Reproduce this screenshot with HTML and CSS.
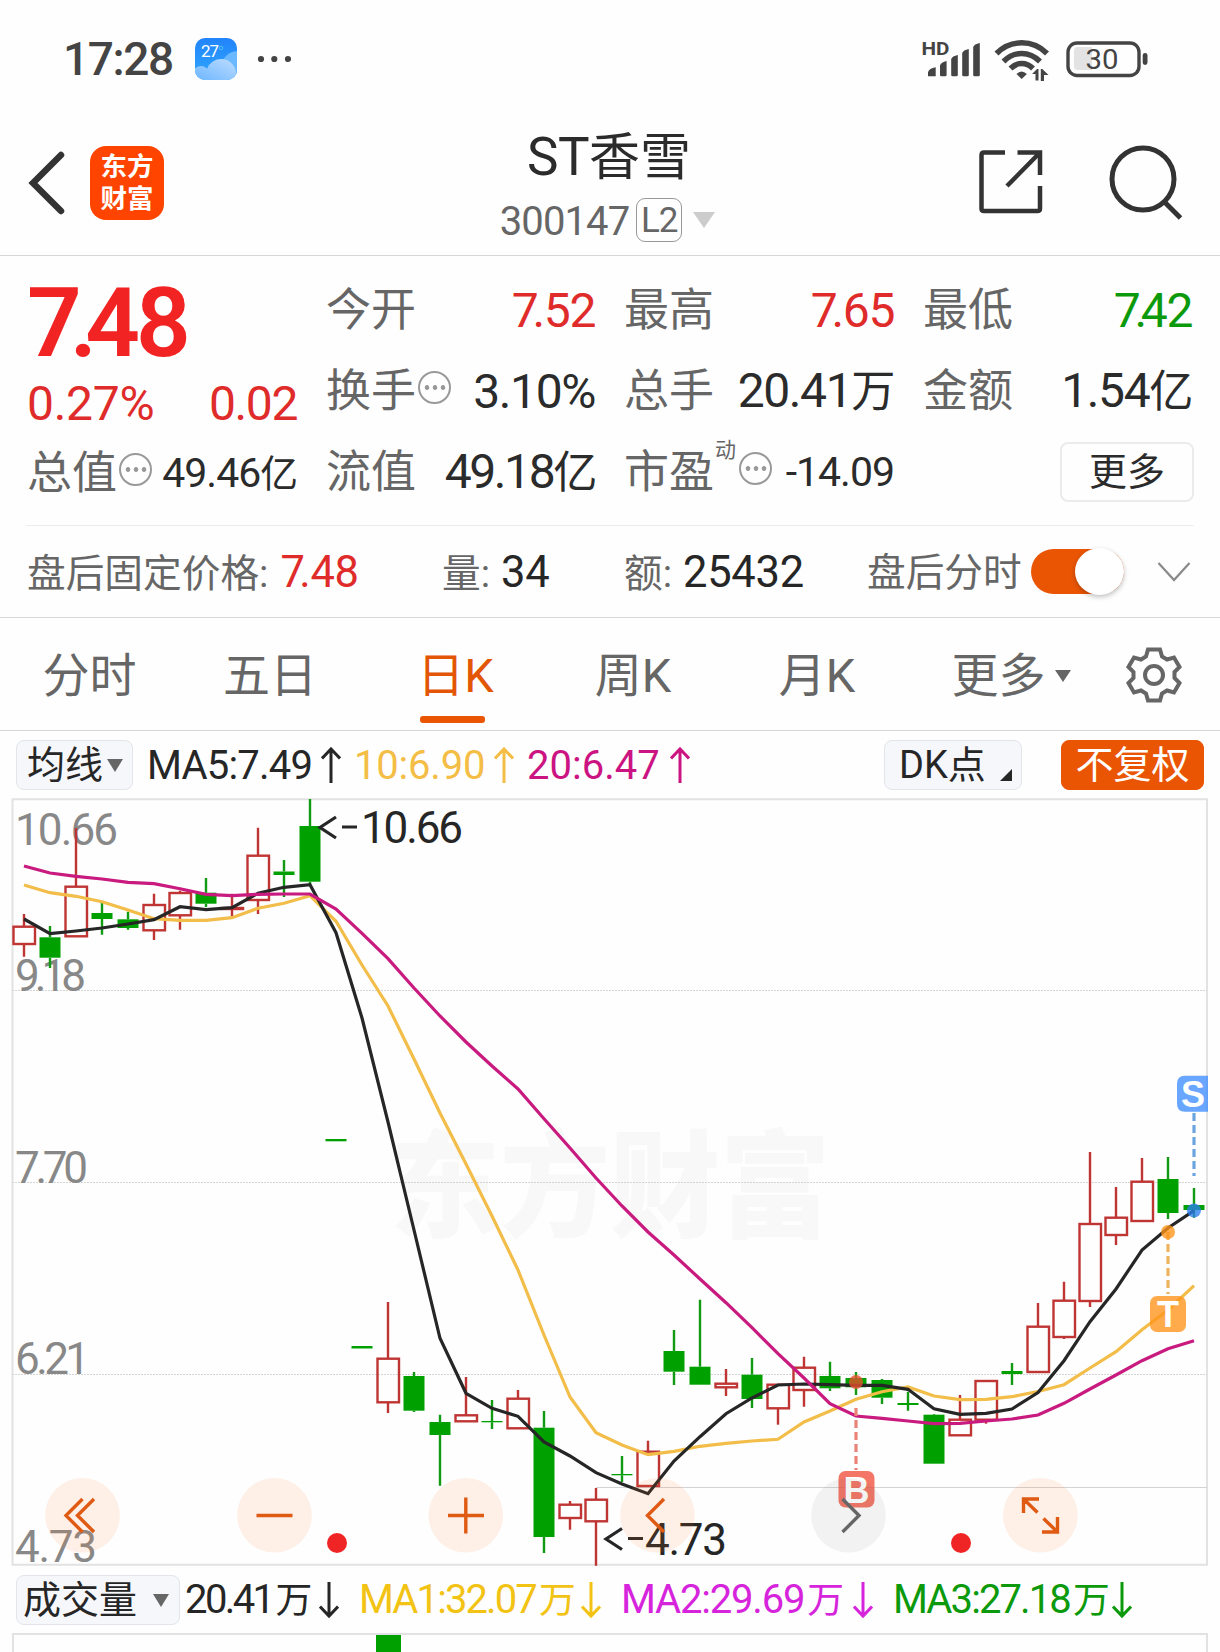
FILE: index.html
```html
<!DOCTYPE html>
<html lang="zh-CN">
<head>
  <meta charset="UTF-8">
  <meta name="viewport" content="width=device-width, initial-scale=1.0">
  <title>ST香雪 300147</title>
  <link rel="stylesheet" href="styles.css">
</head>
<body>
  <!-- Status bar -->
  <div class="status">
    <span class="clock">17:28</span>
    <svg class="weather" width="42" height="42" viewBox="0 0 42 42">
      <defs>
        <linearGradient id="sky" x1="0" y1="0" x2="0" y2="1"><stop offset="0" stop-color="#2284fb"/><stop offset="1" stop-color="#2fa8fd"/></linearGradient>
        <linearGradient id="cloud" x1="0" y1="1" x2="1" y2="0"><stop offset="0" stop-color="#6db6ff"/><stop offset="1" stop-color="#bcdcff"/></linearGradient>
        <clipPath id="tile"><rect width="42" height="42" rx="10"/></clipPath>
      </defs>
      <g clip-path="url(#tile)">
        <rect width="42" height="42" fill="url(#sky)"/>
        <circle cx="43" cy="30" r="17" fill="#6ab8ff"/>
        <circle cx="6" cy="36" r="8" fill="#8cc5ff"/>
        <path d="M0 42V33a8 8 0 0 1 12-2a15 15 0 0 1 29 3v8z" fill="url(#cloud)"/>
      </g>
      <text x="6" y="19" class="weather-text">27</text>
      <circle cx="26" cy="10" r="1.8" fill="none" stroke="#4fc0f0"/>
    </svg>
    <svg class="dots" width="34" height="8" viewBox="0 0 34 8" fill="#444"><circle cx="4" cy="4" r="3.1"/><circle cx="17.3" cy="4" r="3.1"/><circle cx="31" cy="4" r="3.1"/></svg>
    <svg class="system" width="230" height="46" viewBox="920 36 230 46" fill="#444">
      <text x="921.5" y="54.5" class="hd" textLength="28" lengthAdjust="spacingAndGlyphs">HD</text>
      <path d="M928 76.300v-4q1-4 7.700-5v9zM940 75V65.500q1-3.500 6.600-4.500V75q0 1.300-1.300 1.300h-4q-1.300 0-1.300-1.300zM951.200 75V59q1-3 6.600-4V75q0 1.300-1.300 1.300h-4q-1.300 0-1.300-1.300zM962.200 75V53q1-3 6.600-4V75q0 1.300-1.300 1.300h-4q-1.300 0-1.300-1.300zM973.200 75V47q1-3 6.600-4V75q0 1.300-1.300 1.300h-4q-1.300 0-1.300-1.300z"/>
      <g fill="none" stroke="#444" stroke-width="5.600">
        <path d="M996.500 53.500Q1007 42.800 1021.700 42.800T1047 53.500"/>
        <path d="M1003.500 61.500Q1011.500 53.500 1021.700 53.500T1040 61.500"/>
        <path d="M1010.500 68.500Q1015.500 63.500 1021.700 63.500T1033 68.500"/>
      </g>
      <path d="M1016.500 74q5-5 10.400 0l-5.200 5z"/>
      <path d="M1032 74l5-5h1.500v11.500h-3V74zM1048.500 75h-4.500v6h-3.200V69h1.500z"/>
      <rect x="1068" y="43" width="71" height="32.500" rx="9" fill="none" stroke="#444" stroke-width="3.400"/>
      <path d="M1078 47h14v23h-14q-4 0-4-4V51q0-4 4-4z" fill="#e3e3e3"/>
      <rect x="1142.700" y="53" width="4.800" height="12" rx="2.400"/>
      <text x="1085.500" y="69" class="battery" textLength="33" lengthAdjust="spacingAndGlyphs">30</text>
    </svg>
  </div>

  <!-- Title bar -->
  <div class="navbar">
    <svg class="back" width="40" height="66" viewBox="0 0 40 66"><path d="M34 5L6 33l28 28" fill="none" stroke="#333" stroke-width="6.500" stroke-linecap="round"/></svg>
    <div class="logo">东方<br>财富</div>
    <div class="title">
      <div class="name">ST<span>香雪</span></div>
      <div class="code"><span class="digits">300147</span><span class="level">L2</span><i class="tri light"></i></div>
    </div>
    <svg class="share" width="64" height="64" viewBox="0 0 64 64" fill="none" stroke="#333" stroke-width="4.500"><path d="M26 2.500H5Q2.500 2.500 2.500 5v53.500q0 2.500 2.500 2.500h53.500q2.500 0 2.500-2.500V36M38.500 2.500H61V25M61 2.500L28 36"/></svg>
    <svg class="search" width="76" height="76" viewBox="0 0 76 76" fill="none" stroke="#333" stroke-width="5"><circle cx="36" cy="35" r="31"/><path d="M57 57.500L73.500 74"/></svg>
  </div>

  <!-- Quote -->
  <div class="quote">
    <div class="col">
      <div class="price"><s>7</s><s>.</s>48</div>
      <div class="change"><span class="val red wide">0.27%</span><span class="val red">0.02</span></div>
      <div class="item"><span class="label">总值</span><i class="info"></i><span class="val small">49.46<b>亿</b></span></div>
    </div>
    <div class="col">
      <div class="item"><span class="label">今开</span><span class="val red"><s>7</s>.52</span></div>
      <div class="item"><span class="label">换手</span><i class="info"></i><span class="val">3.10%</span></div>
      <div class="item"><span class="label">流值</span><span class="val tight">49.18<b>亿</b></span></div>
    </div>
    <div class="col">
      <div class="item"><span class="label">最高</span><span class="val red"><s>7</s>.65</span></div>
      <div class="item"><span class="label">总手</span><span class="val">20.41<b>万</b></span></div>
      <div class="item"><span class="label">市盈</span><span class="sup">动</span><i class="info"></i><span class="val small">-14.09</span></div>
    </div>
    <div class="col">
      <div class="item"><span class="label">最低</span><span class="val green"><s>7</s><s>.</s>42</span></div>
      <div class="item"><span class="label">金额</span><span class="val">1.54<b>亿</b></span></div>
      <div class="item end"><button class="more">更多</button></div>
    </div>
  </div>

  <!-- After-hours row -->
  <div class="after">
    <div class="fixed-price">盘后固定价格:<em class="red"><s>7</s>.48</em></div>
    <div class="lots">量:<em>34</em></div>
    <div class="amount">额:<em>25432</em></div>
    <div class="switch-label">盘后分时</div>
    <span class="toggle"></span>
    <svg width="34" height="20" viewBox="0 0 34 20"><path d="M1.500 1L17 18 32.500 1" fill="none" stroke="#8a8a8a" stroke-width="2.200"/></svg>
  </div>

  <!-- Period tabs -->
  <div class="tabs">
    <span>分时</span>
    <span>五日</span>
    <span class="active">日K</span>
    <span>周K</span>
    <span>月K</span>
    <span>更多<i class="tri"></i></span>
    <svg width="58" height="58" viewBox="-29 -29 58 58" fill="none" stroke="#666" stroke-width="4">
      <path d="M-6-25.500H6L8-18.500 13-15.500 20-17.500 25.500-8 20.500-3V3L25.500 8 20 17.500 13 15.500 8 18.500 6 25.500H-6L-8 18.500-13 15.500-20 17.500-25.500 8-20.500 3V-3L-25.500-8-20-17.500-13-15.500-8-18.500z"/>
      <circle r="9"/>
    </svg>
  </div>

  <!-- Moving averages -->
  <div class="indicators">
    <span class="chip avg">均线<i class="tri"></i></span>
    <span class="ma black">MA5:7.49</span><svg class="arrow black" viewBox="0 0 20 36"><path d="M10 36V2M1 11.500L10 2l9 9.500"/></svg>
    <span class="ma yellow">10:6.90</span><svg class="arrow yellow" viewBox="0 0 20 36"><path d="M10 36V2M1 11.500L10 2l9 9.500"/></svg>
    <span class="ma magenta">20:6.47</span><svg class="arrow magenta" viewBox="0 0 20 36"><path d="M10 36V2M1 11.500L10 2l9 9.500"/></svg>
    <span class="chip dk">DK点<i class="corner"></i></span>
    <span class="chip adjust">不复权</span>
  </div>

  <!-- Daily K chart -->
  <svg class="chart" width="1220" height="768" viewBox="0 798 1220 768">
    <text x="390" y="1228" class="watermark" textLength="440" lengthAdjust="spacingAndGlyphs">东方财富</text>
    <g class="frame">
      <path d="M12.500 799.300H1207V1564.700H12.500z"/>
      <path d="M596 1487.500H1207" class="thin"/>
      <path d="M12 990.500H1207M12 1182.500H1207M12 1374.500H1207" class="grid"/>
    </g>
    <g class="axis">
      <text x="15" y="845" textLength="103">10.66</text>
      <text x="15" y="990.500" textLength="71">9.18</text>
      <text x="15" y="1182.500" textLength="73">7.70</text>
      <text x="15" y="1374" textLength="75">6.21</text>
      <text x="15" y="1562" textLength="82">4.73</text>
    </g>
    <g id="candles"></g>
    <g id="lines"></g>
    <g class="mark">
      <text x="361" y="843" textLength="102">10.66</text>
      <text x="645" y="1555" textLength="82">4.73</text>
      <path d="M336 817l-16 10.500 16 10.500M342 827h15M622 1528.500l-16 10.500 16 10.500M628 1538.500h15"/>
    </g>
    <g class="signals">
      <path d="M1194 1113V1176" stroke="#6aa5e0"/>
      <path d="M1168 1232V1294" stroke="#edb45c"/>
      <path d="M856 1408V1470" stroke="#ea8277"/>
      <circle cx="1194" cy="1210.500" r="7" fill="#2b7fee"/>
      <circle cx="1168" cy="1232" r="7" fill="#ff9419"/>
      <circle cx="856" cy="1382" r="7" fill="#e8502e"/>
      <path d="M1208 1075.700V1111.700H1185Q1177 1111.700 1177 1103.700V1083.700Q1177 1075.700 1185 1075.700z" fill="#3d8dff"/>
      <rect x="1150" y="1296" width="36" height="36" rx="7" fill="#ff9419"/>
      <rect x="838.500" y="1471" width="36" height="36.500" rx="7" fill="#f0503c"/>
      <text x="1193" y="1107">S</text>
      <text x="1168" y="1327">T</text>
      <text x="856.500" y="1502.500">B</text>
    </g>
    <circle cx="337" cy="1543" r="10" fill="#ef2424"/>
    <circle cx="961" cy="1543" r="10" fill="#ef2424"/>
    <g class="tools">
      <circle cx="82.500" cy="1515.300" r="37.300"/>
      <circle cx="274.500" cy="1515.300" r="37.300"/>
      <circle cx="465.800" cy="1515.300" r="37.300"/>
      <circle cx="657.500" cy="1515.300" r="37.300"/>
      <circle cx="848.500" cy="1515.300" r="37.300" class="off"/>
      <circle cx="1040.400" cy="1515.300" r="37.300"/>
      <path d="M82.500 1499L66 1515.500 82.500 1532M94 1499L77.500 1515.500 94 1532M256.500 1515.500H292.500M448 1515.500H484M465.800 1497.500V1533.500M664 1499L647.500 1515.500 664 1532M1023.500 1513V1499H1039M1023.500 1499L1037.500 1512.500M1042 1532H1057.500V1517M1057.500 1532L1043.500 1518.500"/>
      <path class="off" d="M842.500 1499L859 1515.500 842.500 1532"/>
    </g>
  </svg>

  <!-- Volume -->
  <div class="volume">
    <span class="chip vol">成交量<i class="tri"></i></span>
    <span class="ma black">20.41<b>万</b></span><svg class="arrow black" viewBox="0 0 20 36"><path d="M10 0V34M1 24.500L10 34l9-9.500"/></svg>
    <span class="ma gold">MA1:32.07<b>万</b></span><svg class="arrow gold" viewBox="0 0 20 36"><path d="M10 0V34M1 24.500L10 34l9-9.500"/></svg>
    <span class="ma violet">MA2:29.69<b>万</b></span><svg class="arrow violet" viewBox="0 0 20 36"><path d="M10 0V34M1 24.500L10 34l9-9.500"/></svg>
    <span class="ma green">MA3:27.18<b>万</b></span><svg class="arrow green" viewBox="0 0 20 36"><path d="M10 0V34M1 24.500L10 34l9-9.500"/></svg>
  </div>
  <div class="volume-chart"><i></i></div>

  <script>
    const START = 24;
    const STEP = 26;

    // [up, high, body top, body bottom, low] in chart coordinates
    const candles = [
      [1, 914, 926.7, 944, 956.7], [0, 926, 937.3, 957.7, 968], [1, 828, 886.7, 936.3, 936.3],
      [0, 903, 913, 919, 934.7], [0, 911.7, 919.3, 928, 929.7], [1, 893.7, 905, 930.3, 940],
      [1, 890.7, 893, 915.3, 929.7], [0, 878, 892.7, 903.7, 907], [1, 893.7, 908, 909, 916],
      [1, 827.7, 855.7, 900, 914], [0, 860, 871.5, 875, 897], [0, 799, 826, 881.7, 885],
      [0, 1140, 1139, 1141.3, 1140], [0, 1347, 1346, 1348.5, 1347], [1, 1302, 1358.7, 1402.3, 1413],
      [0, 1372, 1376, 1410.7, 1412], [0, 1414.7, 1422, 1435, 1485.7], [1, 1377, 1415.3, 1421.3, 1421],
      [0, 1400, 1421, 1422.3, 1429], [1, 1390, 1398.7, 1428.3, 1428], [0, 1411, 1427.7, 1537, 1553],
      [1, 1501, 1504.7, 1518, 1529.7], [1, 1488, 1499.7, 1521.3, 1565.7], [0, 1456, 1474, 1475.3, 1482],
      [1, 1440.7, 1451.7, 1486, 1486], [0, 1330, 1351, 1371.7, 1385], [0, 1299.7, 1366.7, 1384.7, 1384],
      [1, 1369, 1383.7, 1387.3, 1396], [0, 1358, 1374.7, 1399, 1408], [1, 1385, 1384.7, 1408.3, 1424.7],
      [1, 1356.7, 1367.7, 1390, 1406.7], [0, 1361.7, 1376, 1388.3, 1391], [0, 1372, 1378, 1387.3, 1395],
      [0, 1379, 1380, 1397.7, 1404], [0, 1391.7, 1403, 1405, 1410.7], [0, 1414, 1414.7, 1463.7, 1463],
      [1, 1395, 1419.7, 1435.3, 1435], [1, 1381, 1381, 1419.7, 1423.7], [0, 1363, 1371, 1374, 1385],
      [1, 1303, 1326.7, 1372, 1372], [1, 1281.7, 1300.7, 1337, 1339], [1, 1152, 1224, 1301, 1307],
      [1, 1187, 1217.7, 1235, 1245], [1, 1158, 1181.7, 1221, 1221], [0, 1157, 1179, 1213, 1219],
      [0, 1188, 1205, 1210, 1217.7]
    ];

    const averages = {
      ma10: [885, 892.7, 896.3, 901.7, 910, 918.7, 920.3, 920.3, 917.7, 908.3, 903.3, 895.7, 921.3, 965, 1006, 1059, 1113, 1164, 1216, 1270, 1335, 1397, 1432.7, 1445, 1454.7, 1451.3, 1446.3, 1443.3, 1441, 1439.3, 1422, 1411, 1399.3, 1391.7, 1387, 1396, 1399.7, 1399.3, 1396.7, 1391.5, 1384.7, 1368, 1351.7, 1329.7, 1310, 1285.7],
      ma5: [919, 933.7, 931, 928, 924, 919.7, 906.7, 909.7, 907.7, 893.3, 887.3, 884.7, 932.7, 1018, 1122, 1230, 1338.3, 1393.3, 1408.3, 1416.3, 1442, 1456, 1472.7, 1484, 1493.7, 1461, 1436.7, 1413.7, 1398, 1385, 1384, 1384.7, 1385.3, 1385.3, 1389.3, 1408.7, 1414.3, 1413.3, 1409, 1392.5, 1360.7, 1321.7, 1289, 1250, 1228, 1210.7],
      ma20: [866, 873, 876.3, 879, 882.3, 883.7, 888.7, 894.3, 895.7, 894.3, 894, 894, 909, 933.3, 958.7, 988, 1016, 1042, 1066, 1089, 1118.7, 1148, 1178, 1206, 1232, 1255, 1279, 1302.7, 1327.7, 1353.7, 1378, 1403.7, 1416, 1418.3, 1421, 1423.7, 1423.3, 1421, 1419, 1415, 1403.3, 1389, 1375, 1360.7, 1348.7, 1340.7]
    };

    document.getElementById('candles').innerHTML = candles.map(([up, high, top, bottom, low], i) => {
      const x = START + STEP * i;
      const wick = `M${x} ${high}V${Math.max(high, top)}M${x} ${bottom}V${Math.max(low, bottom)}`;
      const body = up
        ? `<rect x="${x - 10.5}" y="${top}" width="21.500" height="${bottom - top}"/>`
        : `<rect x="${x - 10.5}" y="${top}" width="21" height="${bottom - top}"/>`;
      return `<g class="${up ? 'rise' : 'fall'}"><path d="${wick}"/>${body}</g>`;
    }).join('');

    document.getElementById('lines').innerHTML = Object.entries(averages).map(([name, ys]) =>
      `<polyline class="${name}" points="${ys.map((y, i) => `${START + STEP * i},${y}`).join(' ')}"/>`
    ).join('');
  </script>
</body>
</html>
```
FILE: styles.css
```css
* {
  box-sizing: border-box;
}
body {
  margin: 0;
  width: 1220px;
  height: 1652px;
  overflow: hidden;
  background: #fefefe;
  color: #2b2b2b;
  font-family: Roboto, "Noto Sans CJK SC", sans-serif;
}
svg {
  display: block;
  flex: none;
}
i, em {
  font-style: normal;
}
b {
  font-weight: 400;
  font-size: 0.92em;
}
/* kerned glyph before or after a decimal point */
s {
  text-decoration: none;
  letter-spacing: -0.13em;
}
.red { color: #e02b2b; }
.green { color: #0c9a0c; }
.black { color: #262626; }
.yellow { color: #f4bd45; }
.magenta { color: #cb1482; }
.gold { color: #f2c314; }
.violet { color: #d624dc; }

/* status bar */
.status {
  height: 118px;
  display: flex;
  align-items: center;
  padding-left: 63px;
}
.clock {
  width: 132px;
  font-size: 46px;
  font-weight: 500;
  letter-spacing: -1.4px;
  color: #444;
}
.weather-text {
  font-size: 17px;
  fill: #fff;
  letter-spacing: -1px;
}
.dots {
  margin-left: 20px;
}
.system {
  margin-left: 629px;
}
.hd {
  font-size: 18.5px;
  font-weight: 700;
}
.battery {
  font-size: 28px;
}

/* title bar */
.navbar {
  height: 138px;
  display: flex;
  align-items: flex-start;
  border-bottom: 1px solid #d6d6d6;
}
.back {
  margin: 32px 0 0 27px;
}
.logo {
  margin: 28px 0 0 23px;
  width: 74px;
  height: 74px;
  padding-top: 5px;
  border-radius: 16px;
  background: #ff4400;
  color: #fff;
  font-size: 26.5px;
  font-weight: 700;
  line-height: 31.5px;
  text-align: center;
}
.title {
  width: 420px;
  margin-left: 234px;
  display: flex;
  flex-direction: column;
  align-items: center;
}
.name {
  margin: 9px 0 0 2px;
  height: 60px;
  line-height: 60px;
  font-size: 53px;
  letter-spacing: -0.5px;
}
.name span {
  font-size: 51px;
  letter-spacing: 0;
}
.code {
  display: flex;
  align-items: center;
  height: 66px;
  margin-right: 1px;
  color: #666;
  font-size: 40px;
}
.digits {
  margin-top: 2px;
  letter-spacing: -0.9px;
}
.level {
  margin-left: 7px;
  width: 46px;
  height: 44px;
  line-height: 44px;
  border: 1.5px solid #999;
  border-radius: 9px;
  font-size: 35px;
  letter-spacing: -1px;
  text-align: center;
}
.tri {
  display: inline-block;
  border: 8px solid transparent;
  border-top: 13px solid #666;
  border-bottom: 0;
}
.tri.light {
  margin-left: 11px;
  border-width: 16px 11.5px 0;
  border-top-color: #ccc;
}
.share {
  margin: 32px 0 0 161px;
}
.search {
  margin: 26px 0 0 64px;
}

/* quote */
.quote {
  display: grid;
  grid-template-columns: 269px 268px 269px 268px;
  column-gap: 30px;
  margin: 0 26px;
  padding: 13px 0 12px 1px;
  border-bottom: 1px solid #ececec;
}
.price {
  height: 106px;
  line-height: 108px;
  font-size: 96px;
  font-weight: 600;
  letter-spacing: -4px;
  color: #f22323;
}
.price s {
  letter-spacing: -12px;
}
.change {
  height: 57px;
  line-height: 58px;
  display: flex;
  justify-content: space-between;
}
.item {
  height: 81px;
  line-height: 81px;
  display: flex;
  align-items: center;
}
.item.end {
  justify-content: flex-end;
}
.label {
  margin-top: 2px;
  font-size: 45px;
  color: #666;
}
.val {
  font-size: 48px;
  letter-spacing: -1.4px;
  margin-right: -1px;
}
.val.wide {
  letter-spacing: -0.3px;
}
.item .val {
  margin-left: auto;
  margin-top: 1px;
}
.item .small {
  font-size: 41px;
  letter-spacing: -1px;
  margin-top: 2px;
}
.val.tight {
  letter-spacing: -2.4px;
}
.info {
  width: 33px;
  height: 33px;
  margin: -6px 0 0 2px;
  border: 2.5px solid #999;
  border-radius: 50%;
  background:
    radial-gradient(circle, #999 2px, transparent 2.7px) 3px 0 / 8px 100% repeat-x;
  background-clip: content-box;
  padding: 0 2px;
}
.sup {
  align-self: flex-start;
  margin: 5px 1px 0 1px;
  line-height: 28px;
  font-size: 21px;
  color: #666;
}
.more {
  width: 134px;
  height: 60px;
  margin-right: -3px;
  padding: 0;
  background: none;
  border: 2px solid #ebebeb;
  border-radius: 8px;
  font: 38px/56px Roboto, "Noto Sans CJK SC", sans-serif;
  color: #2b2b2b;
}

/* after-hours */
.after {
  height: 92px;
  line-height: 88px;
  display: flex;
  align-items: center;
  padding-left: 27px;
  border-bottom: 1px solid #d8d8d8;
  font-size: 38.7px;
  color: #666;
}
.after div {
  margin-top: 3px;
}
.after em {
  margin-left: 11px;
  font-size: 43.5px;
  letter-spacing: -0.3px;
  color: #262626;
}
.after em.red {
  margin-left: 12px;
  color: #e02b2b;
}
.fixed-price { width: 415px; }
.lots { width: 182px; }
.amount { width: 243px; }
.switch-label { width: 164px; }
.toggle {
  width: 93px;
  height: 45px;
  margin-right: 33px;
  border-radius: 23px;
  background: #ea5504;
  display: flex;
  align-items: center;
  justify-content: flex-end;
}
.toggle::after {
  content: "";
  width: 49px;
  height: 47px;
  flex: none;
  border-radius: 50%;
  background: #fff;
  box-shadow: 0 2px 5px rgba(0, 0, 0, 0.25);
}

/* period tabs */
.tabs {
  height: 113px;
  display: grid;
  grid-template-columns: 179px 182px 189px 166px 202px 186px 100px;
  align-items: stretch;
  border-bottom: 1px solid #d6d6d6;
  font-size: 47px;
  line-height: 112px;
  color: #666;
}
.tabs span {
  display: flex;
  align-items: center;
  justify-content: center;
  padding-top: 2px;
}
.tabs svg {
  align-self: center;
  justify-self: center;
}
.tabs .tri {
  margin-left: 9px;
  border-width: 12px 8px 0;
}
.tabs .active {
  position: relative;
  color: #e25606;
}
.active::after {
  content: "";
  position: absolute;
  left: 59px;
  bottom: 9px;
  width: 65px;
  height: 7px;
  border-radius: 3px;
  background: #ea5504;
}

/* indicator rows */
.indicators, .volume {
  height: 67px;
  display: flex;
  align-items: center;
  padding-left: 16px;
}
.chip {
  display: flex;
  align-items: center;
  height: 50px;
  line-height: 47px;
  padding-top: 2px;
  border: 1.5px solid #e2e5e9;
  border-radius: 8px;
  background: #f6f7fb;
  font-size: 38px;
  color: #262626;
}
.avg {
  width: 117px;
  padding-left: 10px;
  margin-right: 14px;
}
.avg .tri {
  margin-left: 4px;
}
.ma {
  font-size: 40px;
  line-height: 67px;
  letter-spacing: -0.8px;
  white-space: nowrap;
}
.arrow {
  width: 20px;
  height: 36px;
  fill: none;
  stroke: currentColor;
  stroke-width: 3;
}
.indicators .ma { margin-top: 2px; }
.indicators .ma.black { width: 174px; }
.indicators .ma.yellow { width: 140px; letter-spacing: -0.2px; }
.indicators .ma.magenta { width: 143px; letter-spacing: 0; }
.indicators .arrow { margin-right: 13px; }
.dk {
  width: 138px;
  margin-left: auto;
  padding-left: 14px;
}
.corner {
  margin: 19px 0 0 14px;
  border-left: 12px solid transparent;
  border-bottom: 12px solid #262626;
}
.adjust {
  width: 143px;
  margin: 0 16px 0 39px;
  justify-content: center;
  border-color: #ea5504;
  background: #ea5504;
  color: #fff;
}

/* chart */
.chart {
  overflow: visible;
}
.frame path {
  fill: none;
  stroke: #e2e2e2;
  stroke-width: 2;
}
.frame .thin {
  stroke: #d4d4d4;
  stroke-width: 1;
}
.frame .grid {
  stroke: #d4d4d4;
  stroke-width: 1;
  stroke-dasharray: 2 1;
}
.watermark {
  font-size: 116px;
  font-weight: 900;
  fill: #f8f8f8;
}
.axis text {
  font-size: 44px;
  fill: #888;
}
.rise {
  fill: none;
  stroke: #bf3533;
  stroke-width: 2.4;
}
.fall {
  fill: #00a000;
}
.fall path {
  stroke: #139a13;
  stroke-width: 2.4;
}
#lines polyline {
  fill: none;
  stroke-width: 3.2;
}
#lines .ma5 { stroke: #262626; }
#lines .ma10 { stroke: #f2bd48; }
#lines .ma20 { stroke: #c81a7f; }
.mark text {
  font-size: 44px;
  fill: #262626;
}
.mark path {
  fill: none;
  stroke: #262626;
  stroke-width: 3.2;
}
.signals path[stroke] {
  fill: none;
  stroke-width: 3.2;
  stroke-dasharray: 8 4;
}
.signals circle, .signals path[fill], .signals rect {
  opacity: 0.78;
}
.signals text {
  font: 700 36px "Liberation Sans", sans-serif;
  fill: #fff;
  text-anchor: middle;
}
.tools circle {
  fill: rgba(255, 120, 50, 0.11);
}
.tools circle.off {
  fill: rgba(100, 100, 100, 0.08);
}
.tools path {
  fill: none;
  stroke: #df5a12;
  stroke-width: 3.4;
}
.tools path.off {
  stroke: #666;
}

/* volume */
.volume .arrow { height: 38px; }
.vol {
  width: 164px;
  padding-left: 6px;
  margin-right: 5px;
}
.vol .tri {
  margin-left: 16px;
}
.volume .ma { letter-spacing: -1.9px; }
.volume .ma.black { width: 134px; letter-spacing: -2.6px; }
.volume .ma.gold { width: 222px; margin-left: 20px; }
.volume .ma.violet { width: 232px; margin-left: 20px; letter-spacing: -1.2px; }
.volume .ma.green { width: 219px; margin-left: 20px; }
.volume b {
  margin-left: 3px;
}
.volume-chart {
  width: 1195.5px;
  height: 40px;
  margin-left: 12px;
  padding-left: 362px;
  border: 2px solid #e2e2e2;
}
.volume-chart i {
  display: block;
  width: 25px;
  height: 38px;
  background: #00a000;
}
```
